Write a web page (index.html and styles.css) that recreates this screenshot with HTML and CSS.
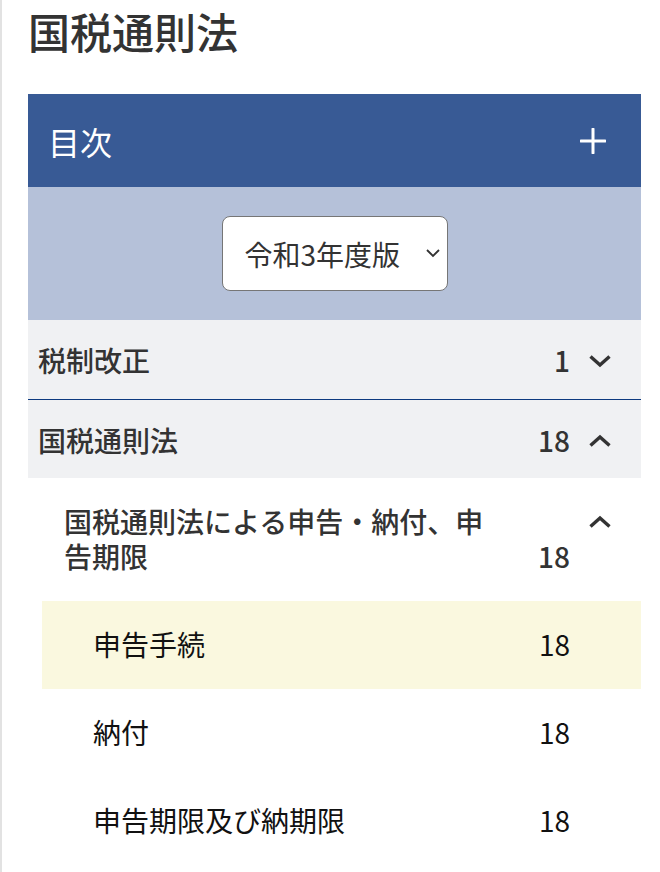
FILE: index.html
```html
<!DOCTYPE html>
<html lang="ja">
<head>
  <meta charset="UTF-8">
  <title>国税通則法 目次</title>
  <link rel="stylesheet" href="styles.css">
</head>
<body>
  <div class="page">
    <h1 class="page-title">国税通則法</h1>

    <div class="toc">
      <div class="toc-head">
        <span class="toc-head-title">目次</span>
        <svg class="toc-plus" width="26" height="26" viewBox="0 0 26 26">
          <path d="M13 1v24M1 13h24" stroke="#fff" stroke-width="3" stroke-linecap="round" fill="none"/>
        </svg>
      </div>

      <div class="toc-version">
        <div class="select-wrap">
          <select class="version-select">
            <option>令和3年度版</option>
          </select>
          <svg class="select-arrow" width="16" height="10" viewBox="0 0 16 10">
            <path d="M2 2l6 6 6-6" stroke="#333" stroke-width="1.8" fill="none"/>
          </svg>
        </div>
      </div>

      <div class="toc-row lvl1 first">
        <span class="label">税制改正</span>
        <span class="count">1</span>
        <span class="chev">
          <svg width="24" height="14" viewBox="0 0 24 14"><path d="M2.5 2.5L12 11 21.5 2.5" stroke="#333" stroke-width="3.4" fill="none"/></svg>
        </span>
      </div>

      <div class="toc-row lvl1">
        <span class="label">国税通則法</span>
        <span class="count">18</span>
        <span class="chev">
          <svg width="24" height="14" viewBox="0 0 24 14"><path d="M2.5 11.5L12 3 21.5 11.5" stroke="#333" stroke-width="3.4" fill="none"/></svg>
        </span>
      </div>

      <div class="toc-row lvl2">
        <span class="label">国税通則法による申告・納付、申告期限</span>
        <span class="count">18</span>
        <span class="chev">
          <svg width="24" height="14" viewBox="0 0 24 14"><path d="M2.5 11.5L12 3 21.5 11.5" stroke="#333" stroke-width="3.4" fill="none"/></svg>
        </span>
      </div>

      <div class="toc-sub">
        <div class="toc-row lvl3 current">
          <span class="label">申告手続</span>
          <span class="count">18</span>
          <span class="chev"></span>
        </div>
        <div class="toc-row lvl3">
          <span class="label">納付</span>
          <span class="count">18</span>
          <span class="chev"></span>
        </div>
        <div class="toc-row lvl3">
          <span class="label">申告期限及び納期限</span>
          <span class="count">18</span>
          <span class="chev"></span>
        </div>
      </div>
    </div>
  </div>
</body>
</html>
```

FILE: styles.css
```css
html, body { margin: 0; padding: 0; background: #fff; }
body { font-family: "Noto Sans CJK JP", "Noto Sans", sans-serif; color: #333; }

.page { border-left: 2px solid #e2e2e2; min-height: 872px; padding: 0 19px 0 26px; box-sizing: border-box; }
.page-title { margin: 0 0 32px; font-size: 42px; line-height: 62px; font-weight: 500; color: #333; }

.toc-head { height: 93px; background: #385a95; display: flex; align-items: center; justify-content: space-between; padding: 0 35px 0 20px; }
.toc-head-title { color: #fff; font-size: 32px; line-height: 1; }

.toc-version { background: #b5c1d9; padding: 29px 0; display: flex; justify-content: center; }
.select-wrap { position: relative; }
.version-select { appearance: none; -webkit-appearance: none; width: 226px; height: 75px; box-sizing: border-box; border: 1px solid #767676; border-radius: 8px; background: #fff; padding: 0 40px 0 22px; font-family: inherit; font-size: 28px; color: #333; }
.select-arrow { position: absolute; right: 7px; top: 32px; }

.toc-row { display: flex; align-items: flex-start; font-size: 28px; line-height: 37px; }
.toc-row .label { flex: 1; }
.toc-row .count { align-self: flex-end; }
.toc-row .chev { width: 24px; height: 37px; margin-left: 18px; display: flex; align-items: center; }

.lvl1 { background: #f0f1f3; font-weight: 500; padding: 22px 29px 19px 10px; }
.lvl1.first { border-bottom: 1px solid #0d3a7f; padding-bottom: 20px; }
.lvl2 { font-weight: 500; padding: 26px 29px 27px 36px; line-height: 35px; }
.lvl2 .label { padding-right: 40px; }
.lvl2 .chev { height: 35px; }

.toc-sub { margin-left: 14px; }
.lvl3 { padding: 25px 29px 26px 51px; color: #111; }
.lvl3.current { background: #faf8df; }
```
